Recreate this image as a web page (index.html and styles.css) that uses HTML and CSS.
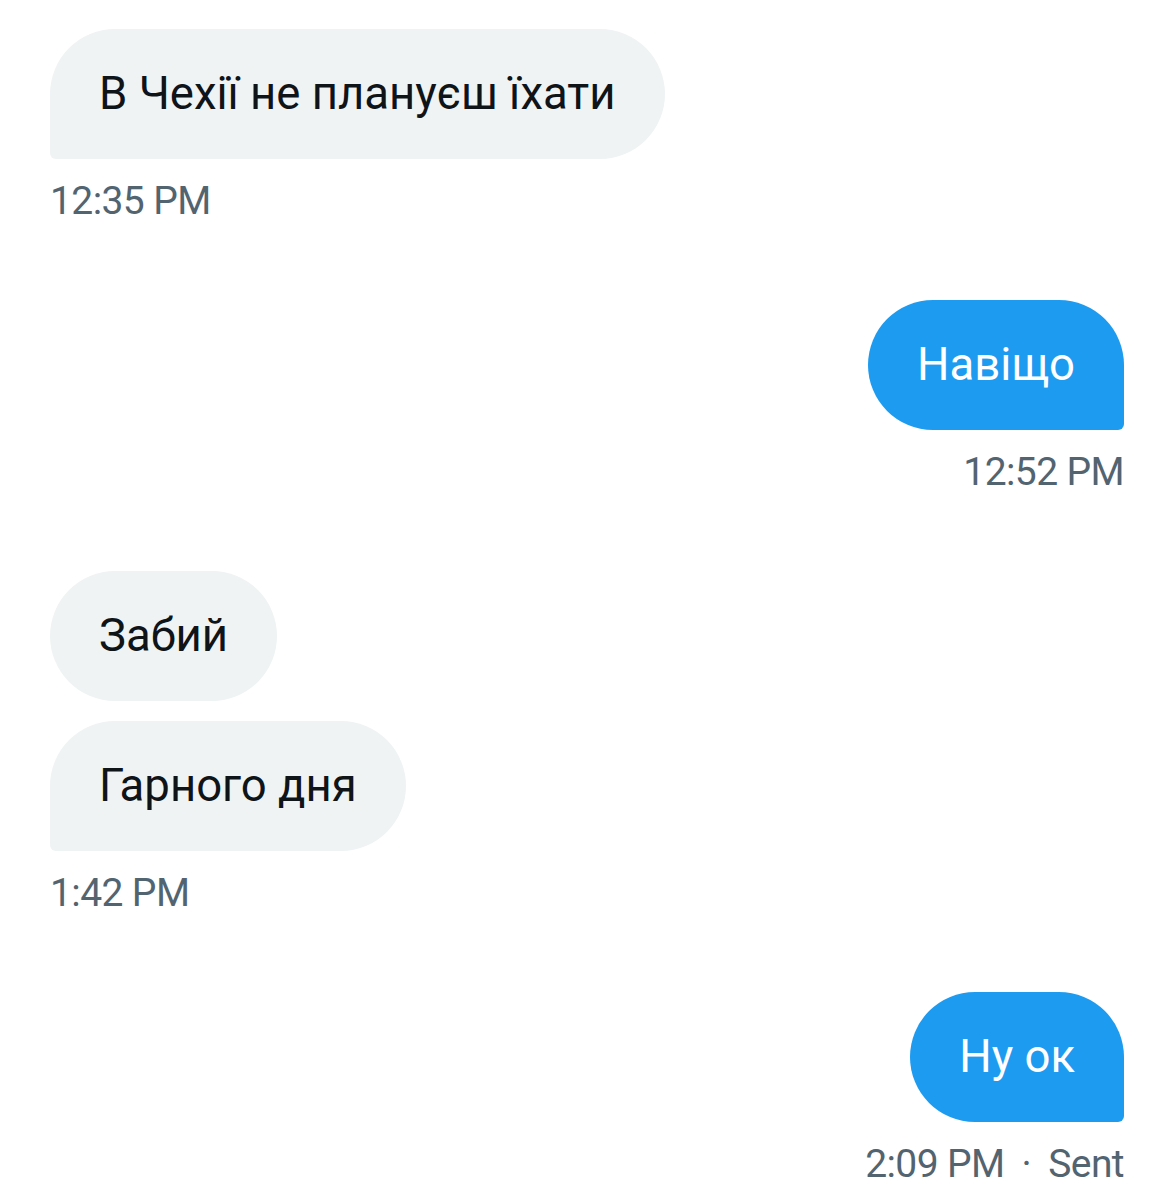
FILE: index.html
```html
<!DOCTYPE html>
<html lang="uk">
<head>
  <meta charset="UTF-8"/>
  <meta name="viewport" content="width=device-width, initial-scale=1.0"/>
  <title>Повідомлення</title>
  <link rel="stylesheet" href="styles.css">
</head>
<body>
  <div class="chat">
    <div class="group in">
      <div class="bubble last">В Чехії не плануєш їхати</div>
      <div class="time">12:35 PM</div>
    </div>

    <div class="group out">
      <div class="bubble last">Навіщо</div>
      <div class="time">12:52 PM</div>
    </div>

    <div class="group in">
      <div class="bubble">Забий</div>
      <div class="bubble last">Гарного дня</div>
      <div class="time">1:42 PM</div>
    </div>

    <div class="group out">
      <div class="bubble last">Ну ок</div>
      <div class="time">2:09 PM <span class="dot">·</span> Sent</div>
    </div>
  </div>
</body>
</html>
```

FILE: styles.css
```css
:root {
  --blue: #1d9bf0;
  --grey-bg: #eff3f4;
  --text: #0f1419;
  --muted: #536471;
}
body {
  margin: 0;
  background: #fff;
  font-family: Roboto, "Noto Sans", Arial, sans-serif;
  color: var(--text);
}
.chat {
  display: flex;
  flex-direction: column;
  gap: 76px;
  padding: 29px 51px 0 50px;
}
.group {
  display: flex;
  flex-direction: column;
  gap: 20px;
}
.group.in {
  align-items: flex-start;
}
.group.out {
  align-items: flex-end;
}
.bubble {
  font-size: 45.5px;
  line-height: 64px;
  padding: 33px 49px;
  border-radius: 65px;
  white-space: nowrap;
}
.in .bubble {
  background: var(--grey-bg);
  color: var(--text);
}
.in .bubble.last {
  border-bottom-left-radius: 6px;
}
.out .bubble {
  background: var(--blue);
  color: #fff;
}
.out .bubble.last {
  border-bottom-right-radius: 6px;
}
.time {
  margin-top: -1px;
  font-size: 39px;
  letter-spacing: -0.6px;
  line-height: 46px;
  color: var(--muted);
}
.dot {
  margin: 0 8px;
}
```
